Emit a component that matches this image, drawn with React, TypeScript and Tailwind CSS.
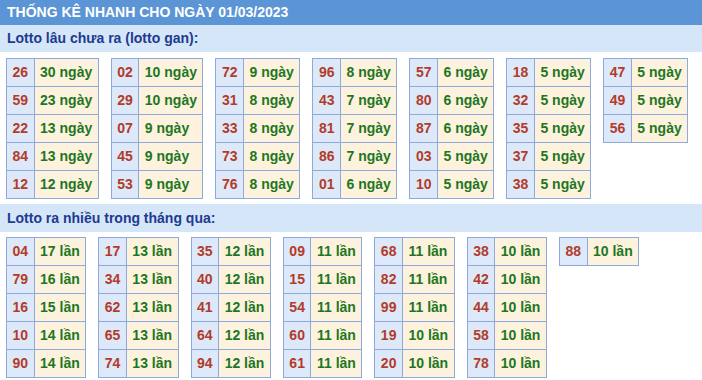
import React from "react";

type Row = [string, number];

const gan: Row[][] = [
  [["26", 30], ["59", 23], ["22", 13], ["84", 13], ["12", 12]],
  [["02", 10], ["29", 10], ["07", 9], ["45", 9], ["53", 9]],
  [["72", 9], ["31", 8], ["33", 8], ["73", 8], ["76", 8]],
  [["96", 8], ["43", 7], ["81", 7], ["86", 7], ["01", 6]],
  [["57", 6], ["80", 6], ["87", 6], ["03", 5], ["10", 5]],
  [["18", 5], ["32", 5], ["35", 5], ["37", 5], ["38", 5]],
  [["47", 5], ["49", 5], ["56", 5]],
];

const nhieu: Row[][] = [
  [["04", 17], ["79", 16], ["16", 15], ["10", 14], ["90", 14]],
  [["17", 13], ["34", 13], ["62", 13], ["65", 13], ["74", 13]],
  [["35", 12], ["40", 12], ["41", 12], ["64", 12], ["94", 12]],
  [["09", 11], ["15", 11], ["54", 11], ["60", 11], ["61", 11]],
  [["68", 11], ["82", 11], ["99", 11], ["19", 10], ["20", 10]],
  [["38", 10], ["42", 10], ["44", 10], ["58", 10], ["78", 10]],
  [["88", 10]],
];

function Tbl({ rows, unit }: { rows: Row[]; unit: string }) {
  return (
    <table className="border-collapse shrink-0">
      <tbody>
        {rows.map(([n, c]) => (
          <tr key={n}>
            <td className="border border-[#8eaadc] bg-[#dde9f9] py-0 px-[5.5px] h-[28px] whitespace-nowrap text-[#b23b2a]">
              {n}
            </td>
            <td className="border border-[#8eaadc] bg-[#fdf2de] py-0 px-[5.5px] h-[28px] whitespace-nowrap text-[#1e771e]">
              {c} {unit}
            </td>
          </tr>
        ))}
      </tbody>
    </table>
  );
}

export default function App() {
  return (
    <div
      className="w-[702px] h-[380px] overflow-hidden bg-white font-bold"
      style={{ fontFamily: '"Liberation Sans", Arial, sans-serif' }}
    >
      <div className="h-[25px] bg-[#5b95d5] text-white text-[14px] flex items-center px-[7px]">
        THỐNG KÊ NHANH CHO NGÀY 01/03/2023
      </div>
      <div className="h-[27px] bg-[#d5e6f9] text-[#1d3b8f] text-[14px] flex items-center px-[7px]">
        Lotto lâu chưa ra (lotto gan):
      </div>
      <div className="flex items-start gap-[12px] px-[6px] pt-[6px] text-[14px]">
        {gan.map((t, i) => (
          <Tbl key={i} rows={t} unit="ngày" />
        ))}
      </div>
      <div className="mt-[5px] h-[28px] bg-[#d5e6f9] text-[#1d3b8f] text-[14px] flex items-center px-[7px]">
        Lotto ra nhiều trong tháng qua:
      </div>
      <div className="flex items-start gap-[12px] px-[6px] pt-[5px] text-[14px]">
        {nhieu.map((t, i) => (
          <Tbl key={i} rows={t} unit="lần" />
        ))}
      </div>
    </div>
  );
}
